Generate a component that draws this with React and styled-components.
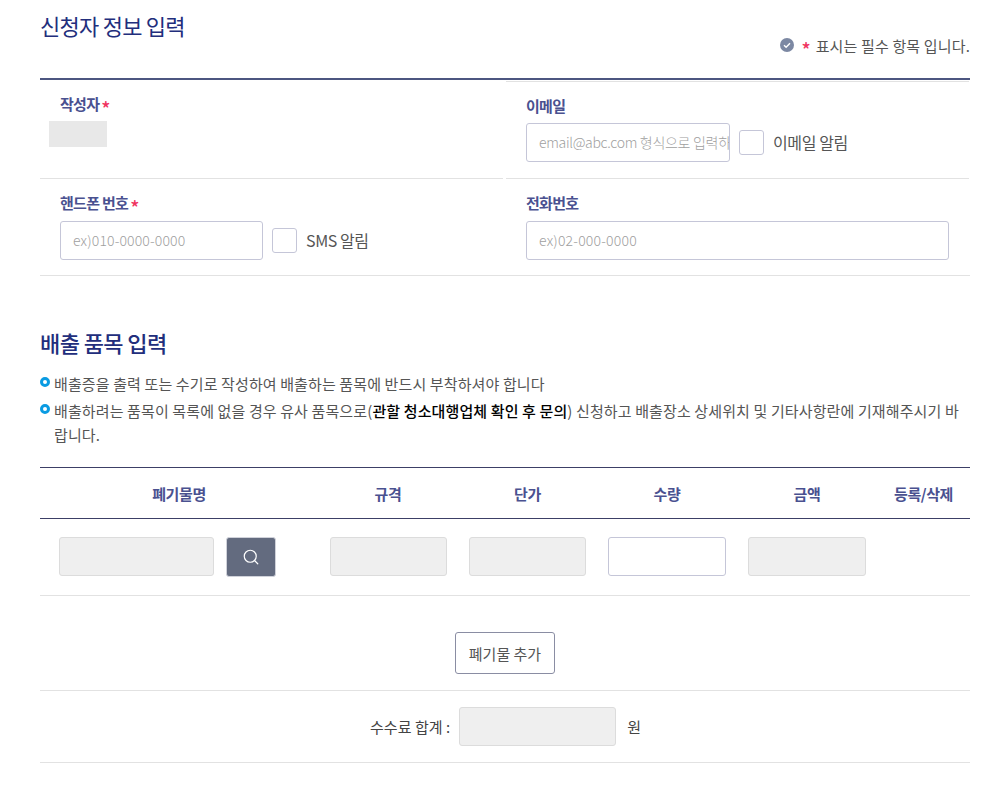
import React from 'react';
import styled, { createGlobalStyle } from 'styled-components';
import { Search } from 'lucide-react';

const COLORS = {
    navy: '#222e7c',
    label: '#4a5190',
    text: '#555',
    line: '#e2e2e2',
    strong: '#4c5680',
    field: '#c5c6d8',
    red: '#f0345f'
};

const GlobalStyle = createGlobalStyle`
    *, *::before, *::after { box-sizing: border-box; }
    html, body { margin: 0; padding: 0; background: #fff; }
    body {
        font-family: "Noto Sans CJK KR", "Noto Sans", sans-serif;
        color: ${COLORS.text};
    }
    input::placeholder { color: #a0a0a0; opacity: 1; }
`;

const Page = styled.div`
    width: 930px;
    margin-left: 40px;
    height: 786px;
    overflow: hidden;
`;

const Head = styled.div`
    display: flex;
    justify-content: space-between;
    height: 78px;
    padding-top: 7px;
`;

const Title = styled.h2`
    margin: 0;
    font-size: 22px;
    line-height: 36px;
    font-weight: 400;
    letter-spacing: -0.75px;
    color: ${COLORS.navy};
`;

const Notice = styled.div`
    display: flex;
    align-items: center;
    align-self: flex-start;
    margin-top: 27px;
    height: 22px;
    font-size: 15px;
    letter-spacing: 0.15px;
    color: ${COLORS.text};
    svg { margin-right: 7px; }
`;

const Star = styled.span`
    display: inline-block;
    color: ${COLORS.red};
    margin: ${({ $gap }) => $gap || '0 0 0 2px'};
    font-size: 19px;
    font-weight: 500;
    line-height: 19px;
    letter-spacing: 0;
    vertical-align: -6px;
`;

const Form = styled.div`
    display: grid;
    grid-template-columns: 463px 463px;
    column-gap: 3px;
    border-top: 2px solid ${COLORS.strong};
    border-bottom: 1px solid ${COLORS.line};
`;

const Cell = styled.div`
    height: ${({ $h }) => $h}px;
    margin-top: ${({ $topLine }) => ($topLine ? 1 : 0)}px;
    padding: 13px 0 0 20px;
    border-top: ${({ $topLine }) => ($topLine ? `1px solid ${COLORS.line}` : '0')};
    border-bottom: ${({ $open }) => ($open ? '0' : `1px solid ${COLORS.line}`)};
`;

const Label = styled.div`
    height: 22px;
    line-height: 22px;
    font-size: 15px;
    font-weight: 700;
    letter-spacing: -0.7px;
    color: ${COLORS.label};
    margin-bottom: ${({ $mb }) => $mb || 7}px;
`;

const Redacted = styled.div`
    width: 58px;
    height: 26px;
    margin-left: -11px;
    background: #e8e8e8;
`;

const FieldRow = styled.div`
    display: flex;
    align-items: center;
`;

const Field = styled.input`
    display: block;
    width: ${({ $w }) => $w}px;
    height: 39px;
    padding: 0 0 2px 12px;
    border: 1px solid ${({ $readOnlyBox }) => ($readOnlyBox ? '#dcdcdc' : COLORS.field)};
    border-radius: 3px;
    background: ${({ $readOnlyBox }) => ($readOnlyBox ? '#efefef' : '#fff')};
    font-family: inherit;
    font-size: 14px;
    font-weight: 300;
    letter-spacing: ${({ $ls }) => $ls ?? -0.3}px;
    color: ${COLORS.text};
    outline: none;
`;

const Check = styled.span`
    display: block;
    width: 25px;
    height: 25px;
    margin: 0 9px;
    border: 1px solid ${COLORS.field};
    border-radius: 3px;
    background: #fff;
`;

const CheckText = styled.span`
    padding-bottom: 2px;
    font-size: 16px;
    letter-spacing: -0.4px;
    color: ${COLORS.text};
`;

const ItemsTitle = styled(Title)`
    margin-top: 48px;
    letter-spacing: -0.6px;
    font-weight: 500;
`;

const Guide = styled.ul`
    list-style: none;
    margin: 12px 0 0;
    padding: 0;
`;

const GuideItem = styled.li`
    position: relative;
    padding: 0 0 0 14px;
    margin-bottom: 3px;
    font-size: 15px;
    line-height: 24px;
    letter-spacing: 0.12px;
    word-break: break-all;
    color: ${COLORS.text};
    &::before {
        content: '';
        position: absolute;
        left: 0;
        top: 5px;
        width: 10px;
        height: 10px;
        border: 3px solid #0a9be2;
        border-radius: 50%;
    }
    b {
        font-weight: 500;
        color: #000;
    }
`;

const TableGrid = styled.div`
    display: grid;
    grid-template-columns: 278px 140px 139px 140px 140px 93px;
    align-items: center;
`;

const TableHead = styled(TableGrid)`
    margin-top: 20px;
    height: 52px;
    border-top: 1px solid #3c3f66;
    border-bottom: 1px solid #3c3f66;
`;

const Th = styled.div`
    text-align: center;
    font-size: 15px;
    font-weight: 700;
    letter-spacing: -0.4px;
    color: ${COLORS.label};
`;

const TableRow = styled(TableGrid)`
    height: 77px;
    border-bottom: 1px solid ${COLORS.line};
    padding-bottom: 1px;
`;

const NameCell = styled.div`
    display: flex;
    align-items: center;
    padding-left: 19px;
    gap: 12px;
`;

const InputCell = styled.div`
    display: flex;
    justify-content: center;
`;

const SearchButton = styled.button`
    display: flex;
    align-items: center;
    justify-content: center;
    width: 50px;
    height: 40px;
    padding: 0;
    border: 1px solid #d0d2da;
    border-radius: 3px;
    background: #636b7f;
    color: #fff;
`;

const AddRow = styled.div`
    display: flex;
    justify-content: center;
    align-items: flex-start;
    height: 95px;
    padding-top: 36px;
    border-bottom: 1px solid ${COLORS.line};
`;

const AddButton = styled.button`
    width: 100px;
    height: 42px;
    padding: 0;
    border: 1px solid #8a8da3;
    border-radius: 3px;
    background: #fff;
    font-family: inherit;
    font-size: 15px;
    letter-spacing: 0;
    color: ${COLORS.text};
`;

const TotalRow = styled.div`
    display: flex;
    align-items: center;
    justify-content: center;
    height: 72px;
    border-bottom: 1px solid ${COLORS.line};
    font-size: 15px;
    color: #444;
    padding-left: 1px;
`;

const TotalLabel = styled.span`
    margin-right: 9px;
    letter-spacing: 0.05px;
`;

const Won = styled.span`
    margin-left: 11px;
`;

const CheckBadge = () => (
    <svg width="14" height="14" viewBox="0 0 14 14">
        <circle cx="7" cy="7" r="7" fill="#7c88a3" />
        <path d="M4 7.2l2.1 2 3.9-4" fill="none" stroke="#fff" strokeWidth="1.4" />
    </svg>
);

const COLUMNS = ['폐기물명', '규격', '단가', '수량', '금액', '등록/삭제'];

const App = () => (
    <Page>
        <GlobalStyle />
        <Head>
            <Title>신청자 정보 입력</Title>
            <Notice>
                <CheckBadge />
                <Star $gap="6px 5px 0 0">*</Star>표시는 필수 항목 입니다.
            </Notice>
        </Head>
        <Form>
            <Cell $h={99}>
                <Label $mb={6}>작성자<Star>*</Star></Label>
                <Redacted />
            </Cell>
            <Cell $h={98} $topLine>
                <Label $mb={6}>이메일</Label>
                <FieldRow>
                    <Field $w={204} placeholder="email@abc.com 형식으로 입력하세요" />
                    <Check />
                    <CheckText>이메일 알림</CheckText>
                </FieldRow>
            </Cell>
            <Cell $h={96} $open>
                <Label>핸드폰 번호<Star>*</Star></Label>
                <FieldRow>
                    <Field $w={203} $ls={0.14} placeholder="ex)010-0000-0000" />
                    <Check />
                    <CheckText>SMS 알림</CheckText>
                </FieldRow>
            </Cell>
            <Cell $h={96} $open>
                <Label>전화번호</Label>
                <Field $w={423} $ls={0.2} placeholder="ex)02-000-0000" />
            </Cell>
        </Form>

        <ItemsTitle>배출 품목 입력</ItemsTitle>
        <Guide>
            <GuideItem>배출증을 출력 또는 수기로 작성하여 배출하는 품목에 반드시 부착하셔야 합니다</GuideItem>
            <GuideItem>
                배출하려는 품목이 목록에 없을 경우 유사 품목으로(<b>관할 청소대행업체 확인 후 문의</b>) 신청하고 배출장소 상세위치 및 기타사항란에 기재해주시기 바랍니다.
            </GuideItem>
        </Guide>

        <TableHead>
            {COLUMNS.map((name) => <Th key={name}>{name}</Th>)}
        </TableHead>
        <TableRow>
            <NameCell>
                <Field $w={155} $readOnlyBox readOnly />
                <SearchButton aria-label="검색"><Search size={18} strokeWidth={1.6} /></SearchButton>
            </NameCell>
            <InputCell><Field $w={117} $readOnlyBox readOnly /></InputCell>
            <InputCell><Field $w={117} $readOnlyBox readOnly /></InputCell>
            <InputCell><Field $w={118} /></InputCell>
            <InputCell><Field $w={118} $readOnlyBox readOnly /></InputCell>
            <div />
        </TableRow>
        <AddRow>
            <AddButton>폐기물 추가</AddButton>
        </AddRow>
        <TotalRow>
            <TotalLabel>수수료 합계 :</TotalLabel>
            <Field $w={157} $readOnlyBox readOnly />
            <Won>원</Won>
        </TotalRow>
    </Page>
);

export default App;
